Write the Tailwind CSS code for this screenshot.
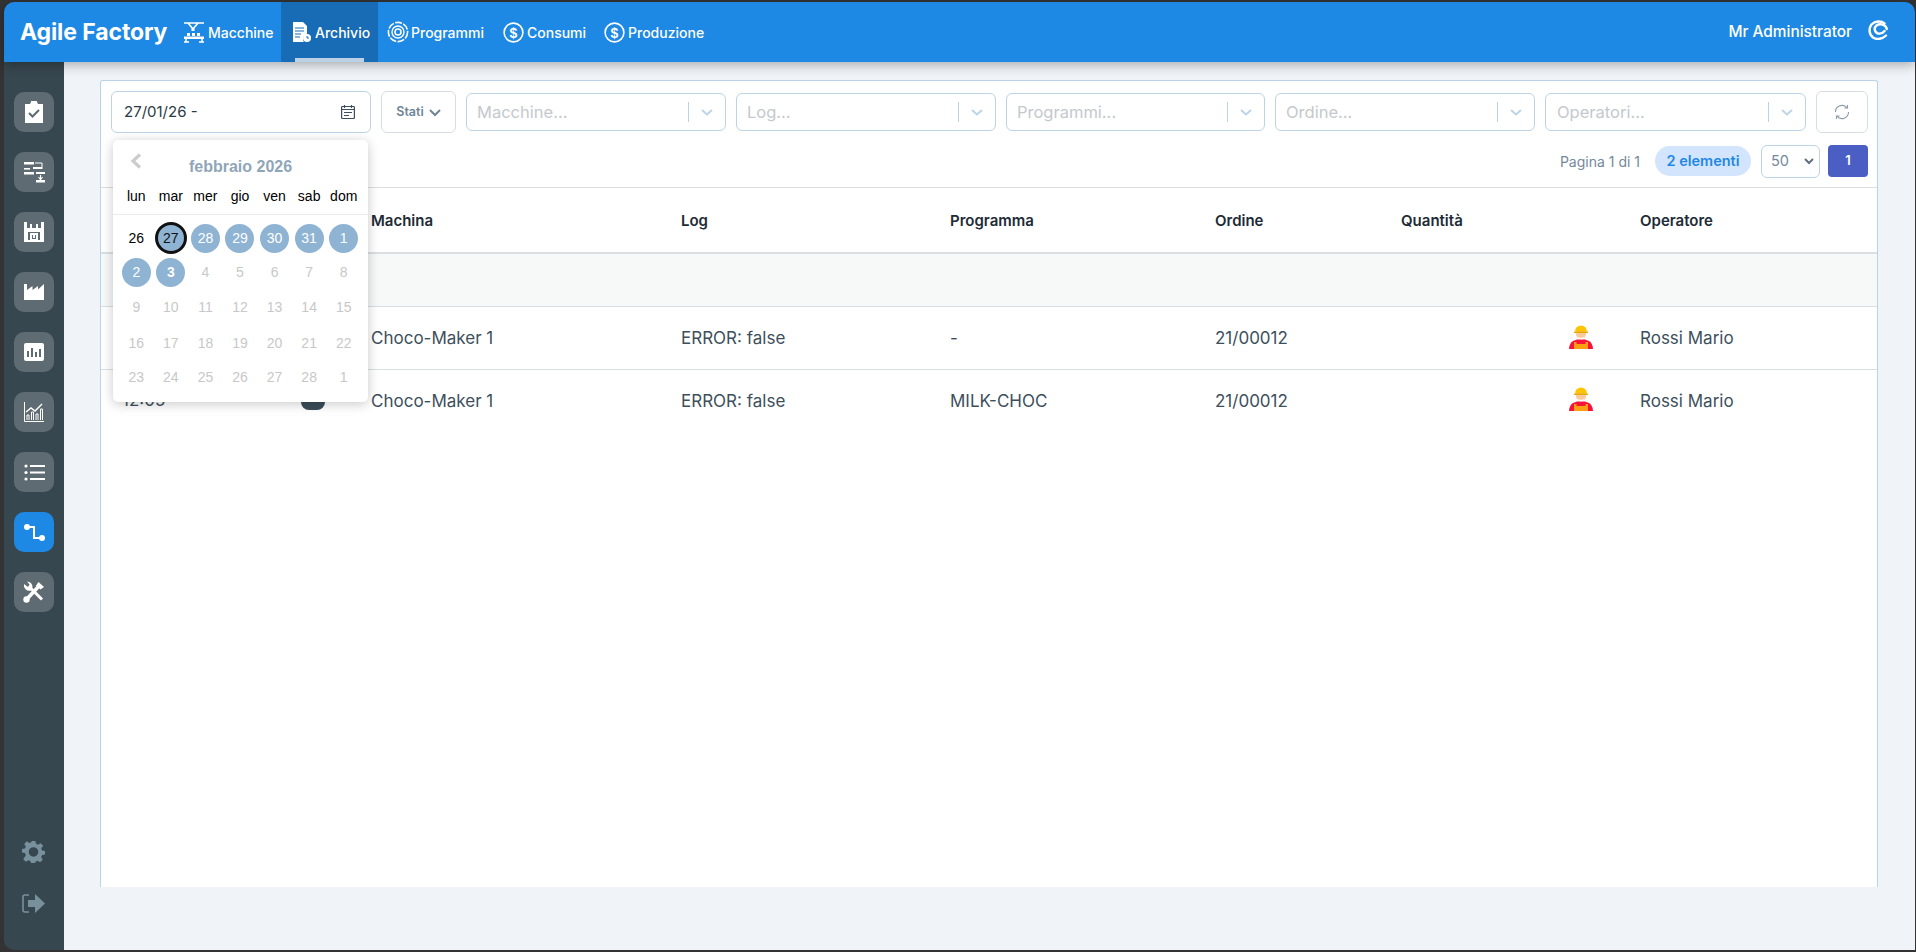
<!DOCTYPE html>
<html lang="it">
<head>
<meta charset="utf-8">
<title>Agile Factory</title>
<script src="https://cdn.jsdelivr.net/npm/@tailwindcss/browser@4"></script>
</head>
<body class="bg-[#333333] overflow-hidden">
<div class="w-[1916px] h-[952px] pt-[2px] pl-[4px] pr-px pb-[2px] flex flex-col font-['Inter','Liberation_Sans',sans-serif]">
  <!-- Header -->
  <header class="h-[60px] shrink-0 bg-[#1e88e5] rounded-t-[10px] flex items-center text-white relative z-20 shadow-[0_3px_12px_rgba(0,0,0,0.3)]">
    <div class="pl-[16px] w-[179px] text-[23px] font-bold tracking-[-0.1px]">Agile Factory</div>
    <nav class="flex h-full items-center text-[14px] font-medium">
      <a class="flex items-center gap-[3px] w-[98px]">
        <svg class="w-[22px] h-[22px]" viewBox="0 0 22 22" fill="none"><path d="M1 2h20M5 2l5 6M15 2l-5 6" stroke="#fff" stroke-width="1.6"/><path d="M8.5 7h3v3h-3z" fill="#fff"/><path d="M4 12h3v3H4zM9 12h3v3H9zM14 12h3v3h-3z" fill="#fff"/><path d="M1 15.5h20V18H1z" fill="#fff"/><path d="M3 18v3M19 18v3M1 21h5M16 21h5" stroke="#fff" stroke-width="1.5"/></svg>
        <span>Macchine</span>
      </a>
      <a class="relative h-full w-[97px] bg-[#186bb5] flex items-center gap-[4px] pl-[12px]">
        <svg class="w-[18px] h-[20px]" viewBox="0 0 18 20"><path d="M0 0h10l4 4v8a5 5 0 0 0-3 8H0z" fill="#fff"/><path d="M2 6h9M2 9h9M2 12h6M2 15h5" stroke="#186bb5" stroke-width="1.2"/><circle cx="14" cy="16" r="4" fill="#fff"/><path d="M14 14v2h2" stroke="#186bb5" stroke-width="1" fill="none"/></svg>
        <span>Archivio</span>
        <span class="absolute bottom-0 left-[14px] w-[69px] h-[4px] bg-[#bcd0e6]"></span>
      </a>
      <a class="flex items-center gap-[2px] pl-[9px] w-[125px]">
        <svg class="w-[22px] h-[22px]" viewBox="0 0 22 22" fill="none" stroke="#fff"><circle cx="11" cy="11" r="3" stroke-width="1.6"/><circle cx="11" cy="11" r="6" stroke-width="1.4"/><circle cx="11" cy="11" r="9.6" stroke-width="1.6" stroke-dasharray="7 1.4"/></svg>
        <span>Programmi</span>
      </a>
      <a class="flex items-center gap-[3px] w-[101px]">
        <svg class="w-[21px] h-[21px]" viewBox="0 0 21 21" fill="none"><circle cx="10.5" cy="10.5" r="9.4" stroke="#fff" stroke-width="1.6"/><text x="10.5" y="15.5" text-anchor="middle" fill="#fff" font-size="14" font-weight="700" font-family="Liberation Sans">$</text></svg>
        <span>Consumi</span>
      </a>
      <a class="flex items-center gap-[3px]">
        <svg class="w-[21px] h-[21px]" viewBox="0 0 21 21" fill="none"><circle cx="10.5" cy="10.5" r="9.4" stroke="#fff" stroke-width="1.6"/><text x="10.5" y="15.5" text-anchor="middle" fill="#fff" font-size="14" font-weight="700" font-family="Liberation Sans">$</text></svg>
        <span>Produzione</span>
      </a>
    </nav>
    <div class="ml-auto flex items-center pr-[27px] gap-[16px]">
      <span class="text-[15.4px] font-medium">Mr Administrator</span>
      <svg class="w-[20px] h-[20px] mt-[-3px]" viewBox="0 0 20 20" fill="none" stroke="#fff" stroke-width="2.4" stroke-linecap="round"><path d="M16.500 3.500C13 .5 7 .8 3.500 4.500.5 8.500 1 14.500 5 17.500c4 2.500 9.500 1.500 13-2"/><path d="M18.800 9C18 4.500 12 3 8.500 5.500 5.500 8 6.500 12.500 10 13.500c2.500.5 5-.5 6.500-2.500"/></svg>
    </div>
  </header>

  <div class="flex flex-1 min-h-0">
    <!-- Sidebar -->
    <aside class="w-[60px] shrink-0 bg-[#37474f] rounded-bl-[10px] flex flex-col items-center pt-[30px]">
      <div class="flex flex-col gap-[20px]">
        <div class="w-[40px] h-[40px] rounded-[10px] bg-[#5f6b72] flex items-center justify-center">
          <svg class="w-[20px] h-[22px]" viewBox="0 0 20 22"><path d="M1 3h5l1-2a3 3 0 0 1 6 0l1 2h5v19H1z" fill="#fff"/><path d="M5 12l3.500 3.500L15 9" stroke="#5f6b72" stroke-width="2" fill="none"/></svg>
        </div>
        <div class="w-[40px] h-[40px] rounded-[10px] bg-[#5f6b72] flex items-center justify-center">
          <svg class="w-[22px] h-[22px]" viewBox="0 0 22 22" fill="#fff"><path d="M1 1h10v2.500H1zM10 6h9v2H10zM1 11h10v2.500H1zM13 11h9v2h-9zM13 19h9v2.500h-9z"/><path d="M1 7h6v1.600H1z"/><path d="M12 2h7v6" stroke="#fff" fill="none" stroke-width="1"/><path d="M17.500 14v4M15.500 16l2 2.500 2-2.500" stroke="#fff" stroke-width="1.100" fill="none"/></svg>
        </div>
        <div class="w-[40px] h-[40px] rounded-[10px] bg-[#5f6b72] flex items-center justify-center">
          <svg class="w-[20px] h-[20px]" viewBox="0 0 20 20" fill="#fff"><path d="M0 0h3v6h3V2h2v4h4V2h2v4h3V0h3v20H0z"/><path d="M4 10h12v8H4z" fill="#5f6b72"/><path d="M6 11h8v7H6z" fill="#fff"/><path d="M8 13h1v3h2v-3h1v4H8z" fill="#5f6b72"/></svg>
        </div>
        <div class="w-[40px] h-[40px] rounded-[10px] bg-[#5f6b72] flex items-center justify-center">
          <svg class="w-[20px] h-[16px]" viewBox="0 0 20 16"><path d="M0 0h3v6l5.500-4v4l5.500-4v3.500L20 0v16H0z" fill="#fff"/></svg>
        </div>
        <div class="w-[40px] h-[40px] rounded-[10px] bg-[#5f6b72] flex items-center justify-center">
          <svg class="w-[20px] h-[18px]" viewBox="0 0 20 18"><rect width="20" height="18" rx="2" fill="#fff"/><path d="M4 8v6M8 5v9M12 9v5M16 6v8" stroke="#5f6b72" stroke-width="2"/></svg>
        </div>
        <div class="w-[40px] h-[40px] rounded-[10px] bg-[#5f6b72] flex items-center justify-center">
          <svg class="w-[20px] h-[20px]" viewBox="0 0 20 20" fill="none" stroke="#fff"><path d="M.5 0v19.500H20" stroke-width="1"/><path d="M3 18v-5h2v5M7.500 18v-8h2v8M12 18v-6h2v6M16.500 18V7h2v11" stroke-width="1"/><path d="M2 10l5-4 4 3 7-7" stroke-width="1.400"/></svg>
        </div>
        <div class="w-[40px] h-[40px] rounded-[10px] bg-[#5f6b72] flex items-center justify-center">
          <svg class="w-[21px] h-[17px]" viewBox="0 0 21 17" fill="#fff"><circle cx="2" cy="2" r="1.600"/><circle cx="2" cy="8.500" r="1.600"/><circle cx="2" cy="15" r="1.600"/><path d="M6 1h15v2H6zM6 7.500h15v2H6zM6 14h15v2H6z"/></svg>
        </div>
        <div class="w-[40px] h-[40px] rounded-[10px] bg-[#1e88e5] flex items-center justify-center">
          <svg class="w-[21px] h-[17px]" viewBox="0 0 21 17" fill="none"><circle cx="3" cy="3" r="3" fill="#fff"/><circle cx="18" cy="14" r="3" fill="#fff"/><path d="M3 3h7v11h8" stroke="#fff" stroke-width="2"/></svg>
        </div>
        <div class="w-[40px] h-[40px] rounded-[10px] bg-[#5f6b72] flex items-center justify-center">
          <svg class="w-[22px] h-[22px]" viewBox="0 0 22 22" fill="none"><path d="M3 19L16 5" stroke="#fff" stroke-width="3.600"/><path d="M15.500 1l5.500 5-3.500 2.500-4.500-4z" fill="#fff"/><path d="M7 6.500L19 18.500" stroke="#fff" stroke-width="3"/><path d="M1 3a5.500 5.500 0 0 0 7 6.500l1.500-3.500A5.500 5.500 0 0 0 4 .5l2.500 3L5 6z" fill="#fff"/><circle cx="3.500" cy="18.500" r="3.200" fill="#fff"/></svg>
        </div>
      </div>
      <div class="mt-auto mb-[37px] flex flex-col items-center gap-[31px] ml-[-2px]">
        <svg class="w-[23px] h-[23px]" viewBox="0 0 24 24" fill="#78909c"><path fill-rule="evenodd" d="M10 1h4l.6 3 2.200 1 2.600-1.700 2.800 2.800L20 8.700l1 2.300 3 .5v3.500l-3 .6-1 2.300 1.700 2.600-2.800 2.800-2.600-1.700-2.300 1-.5 2.400h-4l-.6-2.900-2.200-1-2.600 1.700-2.800-2.800L4 15.900 3 13.600 0 13v-3.500l3-.6 1-2.200L2.300 4.100l2.800-2.800L7.700 3 10 2zM12 7.500a5 5 0 1 0 0 10 5 5 0 0 0 0-10z"/></svg>
        <svg class="w-[23px] h-[19px]" viewBox="0 0 23 19" fill="none"><path d="M7 1H3a2 2 0 0 0-2 2v13a2 2 0 0 0 2 2h4" stroke="#78909c" stroke-width="1.600"/><path d="M6 6h7V0l10 9.500L13 19v-6H6z" fill="#78909c"/></svg>
      </div>
    </aside>

    <!-- Main -->
    <main class="flex-1 min-w-0 bg-[#f0f4f8] pt-[18px] pr-[37px] pl-[36px]">
      <div class="relative h-[807px] bg-white border-t border-x border-[#b9d3e8] rounded-t-[3px]">
        <!-- Filter row -->
        <div class="flex items-center gap-[10px] pt-[10px] pl-[10px]">
          <div class="w-[260px] h-[42px] border border-[#bcd4e6] rounded-[6px] flex items-center justify-between pl-[12px] pr-[15px] text-[15px] text-[#2b3a45]">
            <span class="pt-px">27/01/26 -</span>
            <svg class="w-[14px] h-[14px]" viewBox="0 0 14 14" fill="none" stroke="#3d4f5c" stroke-width="1.200"><rect x=".6" y="1.500" width="12.800" height="12" rx=".8"/><path d="M.6 4.500h12.800M3.500 0v3M10.500 0v3M3 7.500h8M3 10.500h5"/></svg>
          </div>
          <div class="w-[75px] h-[42px] border border-[#d5dee5] rounded-[6px] flex items-center justify-center gap-[5px] text-[12.5px] font-semibold text-[#6f8597]">
            <span class="pt-px">Stati</span>
            <svg class="w-[12px] h-[8px] mt-px" viewBox="0 0 12 8" fill="none" stroke="#6f8597" stroke-width="2"><path d="M1 1l5 5 5-5"/></svg>
          </div>
          <div class="w-[260px] h-[38px] border border-[#bcd4e6] rounded-[6px] flex items-center pl-[10px] text-[16.5px] text-[#c4c9cc]">
            <span class="flex-1">Macchine...</span>
            <span class="w-px h-[20px] bg-[#bcd4e6]"></span>
            <svg class="w-[12px] h-[7px] mx-[12px]" viewBox="0 0 12 7" fill="none" stroke="#bcd4e6" stroke-width="2"><path d="M1 1l5 4.500L11 1"/></svg>
          </div>
          <div class="w-[260px] h-[38px] border border-[#bcd4e6] rounded-[6px] flex items-center pl-[10px] text-[16.5px] text-[#c4c9cc]">
            <span class="flex-1">Log...</span>
            <span class="w-px h-[20px] bg-[#bcd4e6]"></span>
            <svg class="w-[12px] h-[7px] mx-[12px]" viewBox="0 0 12 7" fill="none" stroke="#bcd4e6" stroke-width="2"><path d="M1 1l5 4.500L11 1"/></svg>
          </div>
          <div class="w-[259px] h-[38px] border border-[#bcd4e6] rounded-[6px] flex items-center pl-[10px] text-[16.5px] text-[#c4c9cc]">
            <span class="flex-1">Programmi...</span>
            <span class="w-px h-[20px] bg-[#bcd4e6]"></span>
            <svg class="w-[12px] h-[7px] mx-[12px]" viewBox="0 0 12 7" fill="none" stroke="#bcd4e6" stroke-width="2"><path d="M1 1l5 4.500L11 1"/></svg>
          </div>
          <div class="w-[260px] h-[38px] border border-[#bcd4e6] rounded-[6px] flex items-center pl-[10px] text-[16.5px] text-[#c4c9cc]">
            <span class="flex-1">Ordine...</span>
            <span class="w-px h-[20px] bg-[#bcd4e6]"></span>
            <svg class="w-[12px] h-[7px] mx-[12px]" viewBox="0 0 12 7" fill="none" stroke="#bcd4e6" stroke-width="2"><path d="M1 1l5 4.500L11 1"/></svg>
          </div>
          <div class="w-[261px] h-[38px] border border-[#bcd4e6] rounded-[6px] flex items-center pl-[11px] text-[16.5px] text-[#c4c9cc]">
            <span class="flex-1">Operatori...</span>
            <span class="w-px h-[20px] bg-[#bcd4e6]"></span>
            <svg class="w-[12px] h-[7px] mx-[12px]" viewBox="0 0 12 7" fill="none" stroke="#bcd4e6" stroke-width="2"><path d="M1 1l5 4.500L11 1"/></svg>
          </div>
          <div class="w-[52px] h-[42px] border border-[#d5dee5] rounded-[6px] flex items-center justify-center">
            <svg class="w-[16px] h-[16px]" viewBox="0 0 16 16" fill="none" stroke="#8a99a5" stroke-width="1.100"><path d="M1.500 8a6.500 6.500 0 0 1 11.500-4.200M14.500 8A6.500 6.500 0 0 1 3 12.200"/><path d="M13.500 1v3h-3M2.500 15v-3h3"/></svg>
          </div>
        </div>
        <!-- Pager row -->
        <div class="h-[54px] flex items-center justify-end pr-[9px] pt-[2px] text-[14px]">
          <span class="text-[#74899a] mr-[15px]">Pagina 1 di 1</span>
          <span class="w-[96px] h-[30px] mr-[10px] rounded-full bg-[#d3e4fd] text-[#1e88e5] font-semibold text-[14.5px] flex items-center justify-center">2 elementi</span>
          <div class="w-[59px] h-[33px] mr-[8px] border border-[#bcd4e6] rounded-[6px] flex items-center justify-between pl-[9px] pr-[5px] text-[14.5px] text-[#74899a]">
            <span>50</span>
            <svg class="w-[10px] h-[7px]" viewBox="0 0 10 7" fill="none" stroke="#5f7080" stroke-width="2"><path d="M1 1l4 4 4-4"/></svg>
          </div>
          <span class="w-[40px] h-[32px] rounded-[4px] bg-[#4a5ec4] text-white font-semibold text-[13px] flex items-center justify-center">1</span>
        </div>
        <!-- Table -->
        <div class="border-t border-[#dcdfe2] text-[17px] text-[#3d4f5c]">
          <div class="h-[66px] pt-[2px] grid grid-cols-[270px_310px_269px_265px_186px_239px_1fr] items-center border-b-2 border-[#dcdfe2] font-semibold text-[15px] text-[#212b36]">
            <span></span><span>Machina</span><span>Log</span><span>Programma</span><span>Ordine</span><span>Quantità</span><span>Operatore</span>
          </div>
          <div class="h-[53px] bg-[#f7f8f8] border-b border-[#dcdfe2]"></div>
          <div class="h-[63px] pt-px grid grid-cols-[270px_310px_269px_265px_186px_155px_84px_1fr] items-center border-b border-[#dcdfe2]">
            <span></span><span>Choco-Maker 1</span><span>ERROR: false</span><span>-</span><span>21/00012</span><span></span>
            <span class="relative h-full">
              <svg class="absolute left-[12px] top-[16px] w-[26px] h-[26px]" viewBox="0 0 26 26"><path d="M1 25c0-4 2-7 4-8l4-1.500h8l4 1.500c2 1 4 4 4 8z" fill="#f8123a"/><path d="M6 18h2.500v2h9v-2H20v7H6z" fill="#ff9e12"/><circle cx="13" cy="10" r="5" fill="#f7c99b"/><path d="M9.500 12.500c1.500 1.800 5.500 1.800 7 0-1 3.500-6 3.500-7 0z" fill="#fff"/><path d="M7 7.500a6 6 0 0 1 12 0z" fill="#ffc400"/><path d="M6 7.500h14v1.500H6z" fill="#e8a800"/></svg>
            </span>
            <span>Rossi Mario</span>
          </div>
          <div class="h-[63px] grid grid-cols-[270px_310px_269px_265px_186px_155px_84px_1fr] items-center">
            <span class="relative h-full">
              <span class="absolute left-[21px] top-[18px]">12:05</span>
              <span class="absolute left-[200px] top-[22px] w-[24px] h-[18px] rounded-[8px] bg-[#3b4d5a]"></span>
            </span>
            <span>Choco-Maker 1</span><span>ERROR: false</span><span>MILK-CHOC</span><span>21/00012</span><span></span>
            <span class="relative h-full">
              <svg class="absolute left-[12px] top-[16px] w-[26px] h-[26px]" viewBox="0 0 26 26"><path d="M1 25c0-4 2-7 4-8l4-1.500h8l4 1.500c2 1 4 4 4 8z" fill="#f8123a"/><path d="M6 18h2.500v2h9v-2H20v7H6z" fill="#ff9e12"/><circle cx="13" cy="10" r="5" fill="#f7c99b"/><path d="M9.500 12.500c1.500 1.800 5.500 1.800 7 0-1 3.500-6 3.500-7 0z" fill="#fff"/><path d="M7 7.500a6 6 0 0 1 12 0z" fill="#ffc400"/><path d="M6 7.500h14v1.500H6z" fill="#e8a800"/></svg>
            </span>
            <span>Rossi Mario</span>
          </div>
        </div>
        <!-- Calendar popup -->
        <div class="absolute left-[12px] top-[59px] z-10 w-[255px] h-[262px] bg-white rounded-[5px] shadow-[0_2px_12px_rgba(0,0,0,0.22)] font-['Liberation_Sans',sans-serif] text-[14px] text-black">
          <svg class="absolute left-[17px] top-[13px] w-[12px] h-[16px]" viewBox="0 0 12 16" fill="none" stroke="#cccccc" stroke-width="3.200"><path d="M10 1.500L3 8l7 6.500"/></svg>
          <div class="absolute top-[15px] inset-x-0 text-center text-[16px] font-bold text-[#8fa6b8]">febbraio 2026</div>
          <div class="absolute top-[47px] left-[6px] w-[242px] grid grid-cols-7 text-center leading-[18px]">
            <span>lun</span><span>mar</span><span>mer</span><span>gio</span><span>ven</span><span>sab</span><span>dom</span>
          </div>
          <div class="absolute top-[74px] inset-x-0 h-px bg-[#ececec]"></div>
          <div class="absolute top-[81px] left-[6px] w-[242px] grid grid-cols-7 grid-rows-[34px_34px_37px_34px_34px] place-items-center text-[#c8c8c8]">
            <span class="text-black">26</span>
            <span class="w-[32px] h-[32px] rounded-full border-[3px] border-[#111] bg-[#8fb3d3] text-[#111] flex items-center justify-center">27</span>
            <span class="w-[29px] h-[29px] rounded-full bg-[#8fb3d3] text-white flex items-center justify-center">28</span>
            <span class="w-[29px] h-[29px] rounded-full bg-[#8fb3d3] text-white flex items-center justify-center">29</span>
            <span class="w-[29px] h-[29px] rounded-full bg-[#8fb3d3] text-white flex items-center justify-center">30</span>
            <span class="w-[29px] h-[29px] rounded-full bg-[#8fb3d3] text-white flex items-center justify-center">31</span>
            <span class="w-[29px] h-[29px] rounded-full bg-[#8fb3d3] text-white flex items-center justify-center">1</span>
            <span class="w-[29px] h-[29px] rounded-full bg-[#8fb3d3] text-white flex items-center justify-center">2</span>
            <span class="w-[29px] h-[29px] rounded-full bg-[#8fb3d3] text-white font-bold flex items-center justify-center">3</span>
            <span>4</span><span>5</span><span>6</span><span>7</span><span>8</span>
            <span>9</span><span>10</span><span>11</span><span>12</span><span>13</span><span>14</span><span>15</span>
            <span>16</span><span>17</span><span>18</span><span>19</span><span>20</span><span>21</span><span>22</span>
            <span>23</span><span>24</span><span>25</span><span>26</span><span>27</span><span>28</span><span>1</span>
          </div>
        </div>
      </div>
    </main>
  </div>
</div>
</body>
</html>
